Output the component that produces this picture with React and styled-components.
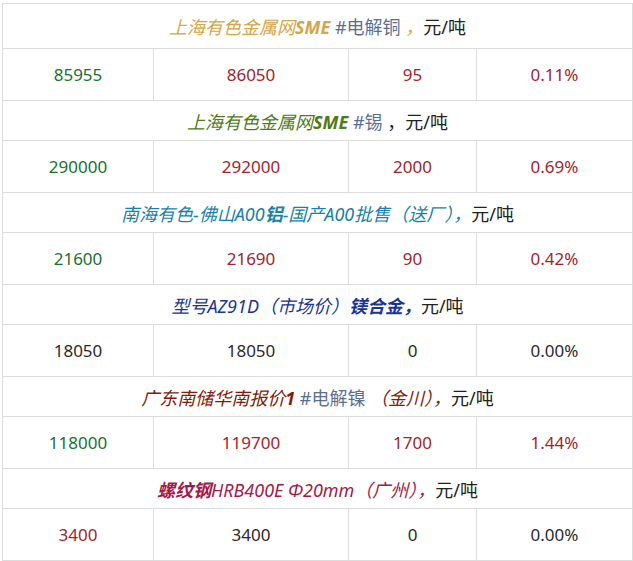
import React from 'react';
import styled, { createGlobalStyle } from 'styled-components';

const GlobalStyle = createGlobalStyle`
  body {
    margin: 0;
    background: #fff;
    font-family: "Noto Sans", "Noto Sans CJK SC", sans-serif;
  }
`;

const Wrap = styled.div`
  padding: 3px 1px 0 2px;
`;

const Table = styled.table`
  width: 630px;
  border-collapse: collapse;
  table-layout: fixed;
`;

const TitleCell = styled.td`
  height: ${(p) => (p.first ? 44 : 39)}px;
  padding: 0;
  border: 1px solid #dcdcdc;
  text-align: center;
  font-size: 18px;
  color: #222;
  white-space: nowrap;
`;

const Cell = styled.td`
  height: 51px;
  padding: 0;
  border: 1px solid #dcdcdc;
  text-align: center;
  font-size: 17px;
  color: ${(p) => p.tone || '#2a2a2a'};
`;

// 标题里的斜体彩色片段
const Em = styled.span`
  font-style: italic;
  font-weight: ${(p) => (p.bold ? 700 : 400)};
  color: ${(p) => p.color};
`;

const Tag = styled.span`
  color: #5b6e92;
`;

const GREEN = '#20702f';
const RED = '#a0262c';
const BLACK = '#2a2a2a';

const rows = [
  {
    title: (
      <>
        <Em color="#d4a64a">上海有色金属网</Em>
        <Em color="#d4a64a" bold>SME</Em> <Tag>#电解铜</Tag>
        <Em color="#d4a64a"> ，</Em>元/吨
      </>
    ),
    first: true,
    cells: [
      ['85955', GREEN],
      ['86050', RED],
      ['95', RED],
      ['0.11%', RED],
    ],
  },
  {
    title: (
      <>
        <Em color="#4f7a17">上海有色金属网</Em>
        <Em color="#4f7a17" bold>SME</Em> <Tag>#锡</Tag> ，元/吨
      </>
    ),
    cells: [
      ['290000', GREEN],
      ['292000', RED],
      ['2000', RED],
      ['0.69%', RED],
    ],
  },
  {
    title: (
      <>
        <Em color="#1b7fa8">南海有色-佛山A00</Em>
        <Em color="#1b7fa8" bold>铝</Em>
        <Em color="#1b7fa8">-国产A00批售（送厂），</Em>元/吨
      </>
    ),
    cells: [
      ['21600', GREEN],
      ['21690', RED],
      ['90', RED],
      ['0.42%', RED],
    ],
  },
  {
    title: (
      <>
        <Em color="#1a3594">型号AZ91D（市场价）</Em>
        <Em color="#1a3594" bold>镁合金，</Em>元/吨
      </>
    ),
    cells: [
      ['18050', BLACK],
      ['18050', BLACK],
      ['0', BLACK],
      ['0.00%', BLACK],
    ],
  },
  {
    title: (
      <>
        <Em color="#7d1e0c">广东南储华南报价</Em>
        <Em color="#7d1e0c" bold>1</Em> <Tag>#电解镍</Tag>
        <Em color="#7d1e0c"> （金川），</Em>元/吨
      </>
    ),
    cells: [
      ['118000', GREEN],
      ['119700', RED],
      ['1700', RED],
      ['1.44%', RED],
    ],
  },
  {
    title: (
      <>
        <Em color="#a11b4b" bold>螺纹钢</Em>
        <Em color="#a11b4b">HRB400E Φ20mm（广州），</Em>元/吨
      </>
    ),
    cells: [
      ['3400', RED],
      ['3400', BLACK],
      ['0', BLACK],
      ['0.00%', BLACK],
    ],
  },
];

const App = () => (
  <Wrap>
    <GlobalStyle />
    <Table>
      <colgroup>
        <col style={{ width: 151 }} />
        <col style={{ width: 195 }} />
        <col style={{ width: 128 }} />
        <col style={{ width: 156 }} />
      </colgroup>
      <tbody>
        {rows.map((row, i) => (
          <React.Fragment key={i}>
            <tr>
              <TitleCell colSpan={4} first={row.first}>
                {row.title}
              </TitleCell>
            </tr>
            <tr>
              {row.cells.map(([v, tone], j) => (
                <Cell key={j} tone={tone}>
                  {v}
                </Cell>
              ))}
            </tr>
          </React.Fragment>
        ))}
      </tbody>
    </Table>
  </Wrap>
);

export default App;
